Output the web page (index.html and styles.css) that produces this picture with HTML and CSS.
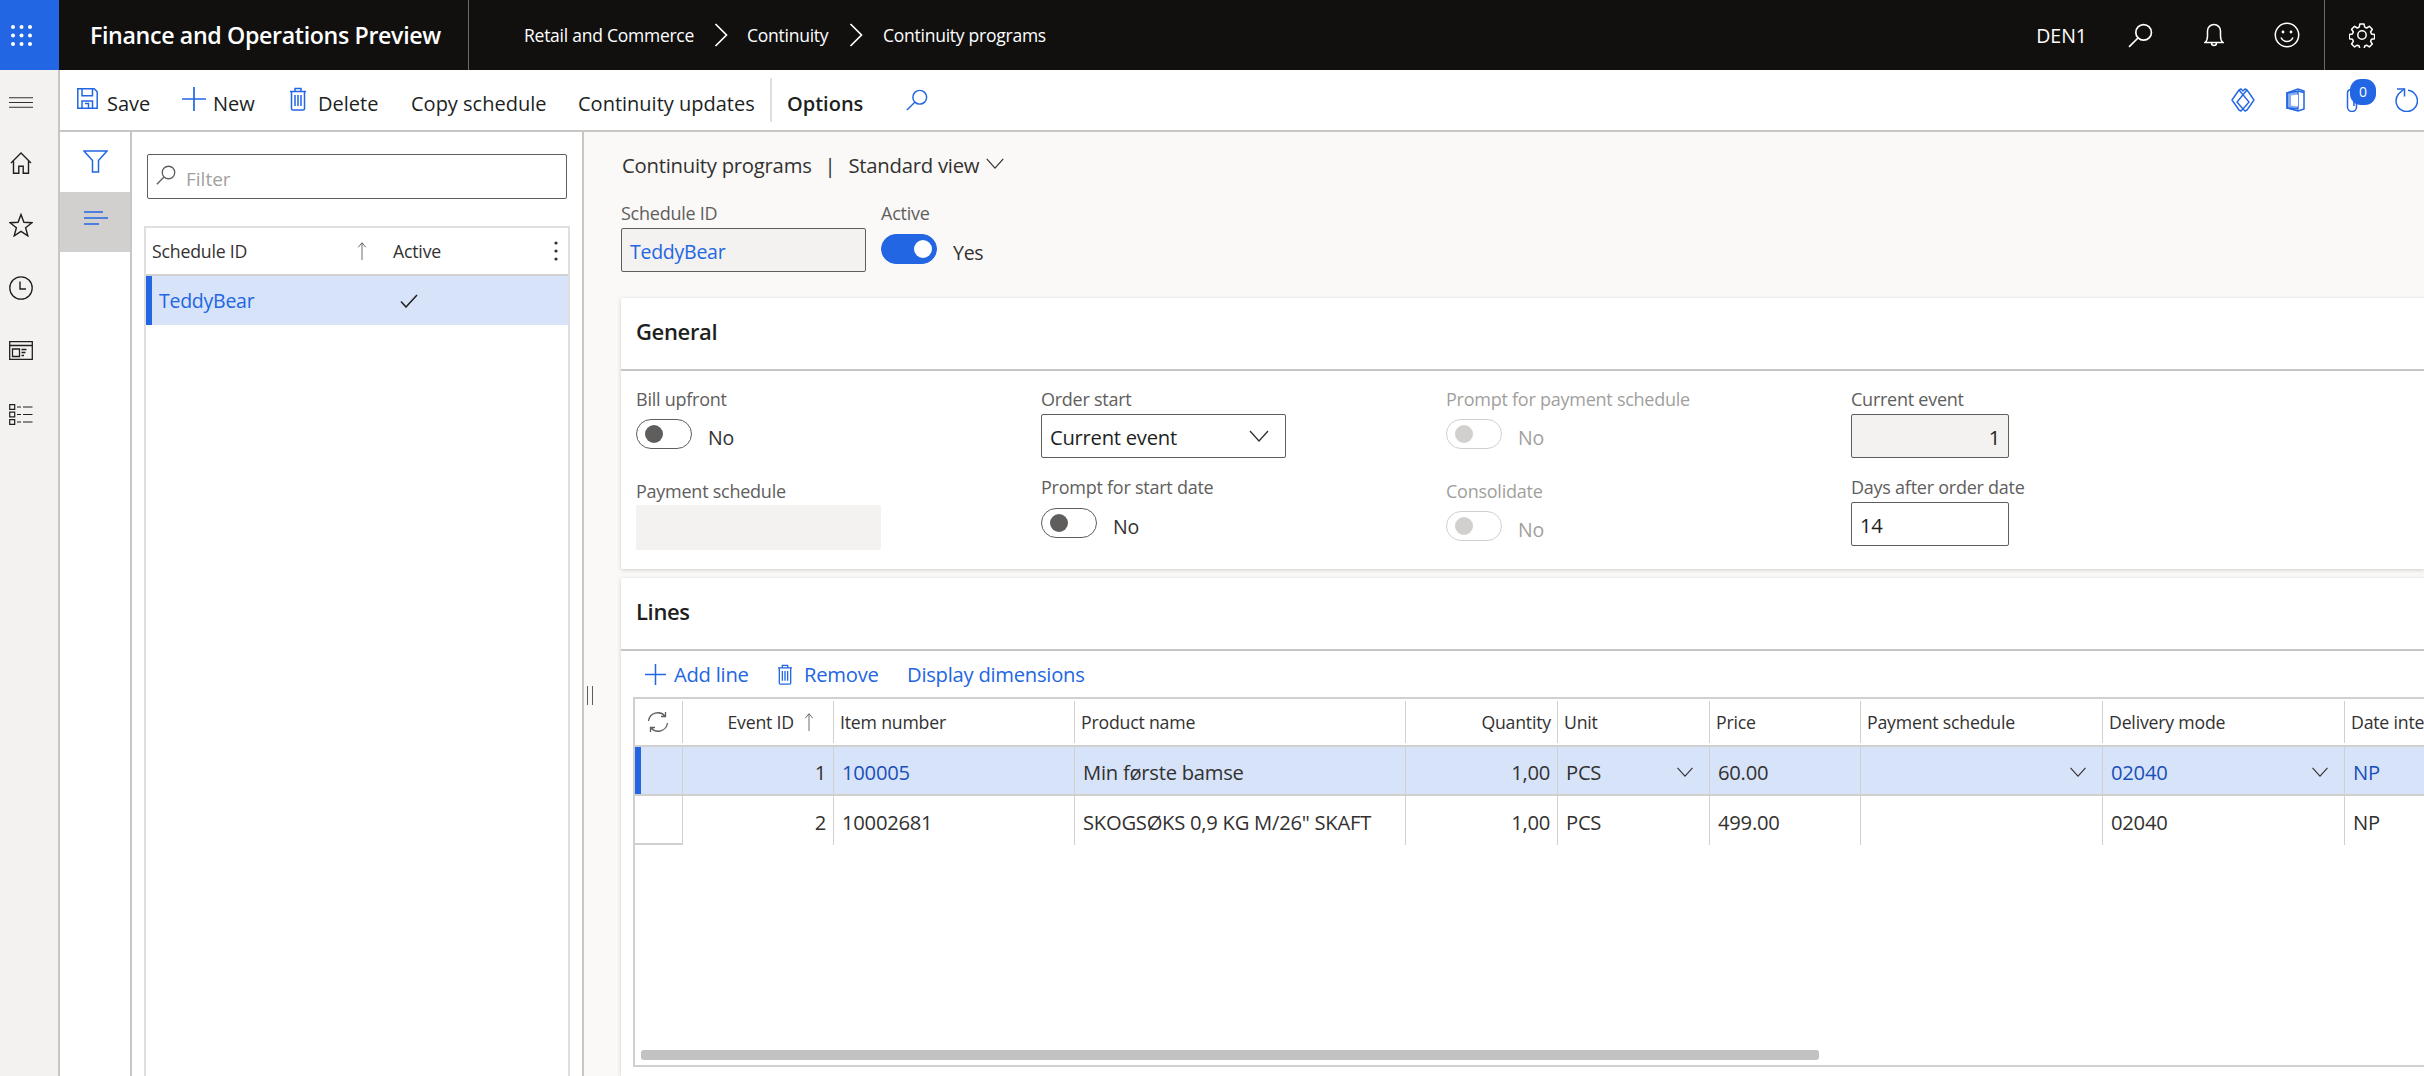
FILE: index.html
```html
<!DOCTYPE html>
<html lang="en">
<head>
<meta charset="utf-8">
<title>Continuity programs</title>
<link rel="stylesheet" href="styles.css">
</head>
<body>
<svg class="defs" width="0" height="0" aria-hidden="true">
  <symbol id="i-search" viewBox="0 0 24 24"><circle cx="15" cy="9" r="7.5" fill="none" stroke="currentColor" stroke-width="1.6"/><path d="M9.6 14.4 1 23" fill="none" stroke="currentColor" stroke-width="1.6"/></symbol>
  <symbol id="i-trash" viewBox="0 0 18 24"><path d="M1 4.5h16M6 4.500V1.500h6v3M2.500 4.500V22a1.200 1.200 0 0 0 1.200 1h10.600a1.200 1.200 0 0 0 1.200-1V4.500M6 8v11M9 8v11M12 8v11" fill="none" stroke="currentColor" stroke-width="1.500"/></symbol>
  <symbol id="i-plus" viewBox="0 0 24 24"><path d="M12 0v24M0 12h24" fill="none" stroke="currentColor" stroke-width="1.700"/></symbol>
  <symbol id="i-chev" viewBox="0 0 20 12"><path d="M1 1l9 10 9-10" fill="none" stroke="currentColor" stroke-width="1.300"/></symbol>
  <symbol id="i-up" viewBox="0 0 12 24"><path d="M6 24V1M1 7l5-6 5 6" fill="none" stroke="currentColor" stroke-width="1.200"/></symbol>
</svg>

<div class="app">
  <header class="topbar">
    <div class="waffle">
      <svg class="waffle-icon" viewBox="0 0 23 23"><g fill="#fff"><circle cx="3" cy="3" r="2"/><circle cx="11.500" cy="3" r="2"/><circle cx="20" cy="3" r="2"/><circle cx="3" cy="11.500" r="2"/><circle cx="11.500" cy="11.500" r="2"/><circle cx="20" cy="11.500" r="2"/><circle cx="3" cy="20" r="2"/><circle cx="11.500" cy="20" r="2"/><circle cx="20" cy="20" r="2"/></g></svg>
    </div>
    <div class="app-title">Finance and Operations Preview</div>
    <nav class="crumbs">
      <span>Retail and Commerce</span>
      <svg class="crumb-chev" viewBox="0 0 14 24"><path d="M1.500 1l11 11-11 11" fill="none" stroke="currentColor" stroke-width="1.700"/></svg>
      <span>Continuity</span>
      <svg class="crumb-chev" viewBox="0 0 14 24"><path d="M1.500 1l11 11-11 11" fill="none" stroke="currentColor" stroke-width="1.700"/></svg>
      <span>Continuity programs</span>
    </nav>
    <div class="top-right">
      <span class="company">DEN1</span>
      <svg class="top-icon ti-search"><use href="#i-search"/></svg>
      <svg class="top-icon ti-bell" viewBox="0 0 20 24"><path d="M1 19.500c2-1.500 2.500-3 2.500-6.500V8a6.500 6.500 0 0 1 13 0v5c0 3.500.5 5 2.500 6.500zM7.500 20a2.500 2.500 0 0 0 5 0" fill="none" stroke="currentColor" stroke-width="1.500"/></svg>
      <svg class="top-icon ti-smile" viewBox="0 0 26 26"><circle cx="13" cy="13" r="11.700" fill="none" stroke="currentColor" stroke-width="1.500"/><circle cx="9" cy="10" r="1.400" fill="currentColor"/><circle cx="17" cy="10" r="1.400" fill="currentColor"/><path d="M7 15.500c1.500 3 3.500 4 6 4s4.500-1 6-4" fill="none" stroke="currentColor" stroke-width="1.500"/></svg>
      <div class="top-settings">
        <svg class="top-icon ti-gear" viewBox="0 0 26 26"><path d="M10.800 1.500h4.400l.7 3.300 2 .9 2.900-1.800 3.100 3.100-1.800 2.900.9 2 3.300.7v4.400l-3.300.6-.9 2.100 1.800 2.800-3.100 3.100-2.900-1.800-2 .9-.7 3.100h-4.400l-.7-3.100-2-.9-2.900 1.800-3.100-3.100 1.800-2.800-.9-2.100-3.300-.6v-4.400l3.300-.7.9-2-1.800-2.900 3.100-3.100 2.900 1.800 2-.9z" transform="translate(.6 .6) scale(.95)" fill="none" stroke="currentColor" stroke-width="1.600" stroke-linejoin="round"/><circle cx="13" cy="13" r="4.200" fill="none" stroke="currentColor" stroke-width="1.500"/></svg>
      </div>
    </div>
  </header>

  <div class="main">
    <aside class="rail">
      <svg class="rail-burger" viewBox="0 0 24 11"><path d="M0 .7h24M0 5.500h24M0 10.300h24" stroke="#323130" stroke-width="1.100" fill="none"/></svg>
      <svg class="rail-icon rail-home" viewBox="0 0 22 22"><path d="M1 11 11 1l10 10M3.500 9v12.300h5.300v-7h4.400v7h5.300V9" fill="none" stroke="currentColor" stroke-width="1.400"/></svg>
      <svg class="rail-icon rail-star" viewBox="0 0 24 24"><path d="M12 1.500l2.900 7.800 8.100.4-6.400 5.100 2.200 8L12 18.300l-6.800 4.500 2.200-8L1 9.700l8.100-.4z" fill="none" stroke="currentColor" stroke-width="1.400"/></svg>
      <svg class="rail-icon rail-clock" viewBox="0 0 24 24"><circle cx="12" cy="12" r="11.200" fill="none" stroke="currentColor" stroke-width="1.300"/><path d="M11 5.500v7.500h6" fill="none" stroke="currentColor" stroke-width="1.400"/></svg>
      <svg class="rail-icon rail-space" viewBox="0 0 24 19"><path d="M.7.700h22.600v17.600H.7zM.7 4.500h22.600M3.500 8h7v7.500h-7zM12.500 8.500h5M12.500 11.500h4M12.500 14.500h2.500" fill="none" stroke="currentColor" stroke-width="1.300"/></svg>
      <svg class="rail-icon rail-list" viewBox="0 0 24 21"><path d="M.7.700h5v4.600h-5zM.7 8.200h5v4.600h-5zM.7 15.700h5v4.600h-5zM8 3h4M14 3h9.500M8 10.500h4M14 10.500h9.500M8 18h4M14 18h9.500" fill="none" stroke="currentColor" stroke-width="1.200"/></svg>
    </aside>

    <div class="workspace">
      <div class="cmdbar">
        <button class="cmd cmd-save">
          <svg class="cmd-icon ic-save" viewBox="0 0 21 21"><path d="M.8.800h16.400l3 3v16.400H.8zM5 .8v7h10.500v-7M5 20v-7h10.500v7M8 15.500h3.500V20" fill="none" stroke="currentColor" stroke-width="1.500"/></svg>
          <span>Save</span>
        </button>
        <button class="cmd cmd-new"><svg class="cmd-icon ic-plus"><use href="#i-plus"/></svg><span>New</span></button>
        <button class="cmd cmd-delete"><svg class="cmd-icon ic-trash"><use href="#i-trash"/></svg><span>Delete</span></button>
        <button class="cmd cmd-copy"><span>Copy schedule</span></button>
        <button class="cmd cmd-updates"><span>Continuity updates</span></button>
        <span class="cmd-sep"></span>
        <button class="cmd cmd-options"><span>Options</span></button>
        <svg class="cmd-icon ic-find"><use href="#i-search"/></svg>
        <div class="cmd-right">
          <svg class="cmd-icon ic-diamond" viewBox="0 0 24 24"><path d="M1 12 8 2l2-1 2 2 2-2 2 1 7 10-7 10-2 1-2-2-2 2-2-1zM8 2l10 12-6 7M16 2 6 14l6 7" fill="none" stroke="currentColor" stroke-width="1.400" stroke-linejoin="round"/></svg>
          <svg class="cmd-icon ic-office" viewBox="0 0 19 24"><path d="M1 5 12 1l6 2v18l-6 2-11-3z" fill="none" stroke="currentColor" stroke-width="1.500"/><path d="M1 5l11-2v18l-11-1zM12 3l6 1.500" fill="currentColor" fill-opacity=".55" stroke="currentColor" stroke-width="1.400"/><path d="M5 7.500l7-1v12l-7-1z" fill="#fff"/></svg>
          <span class="clip-wrap">
            <svg class="cmd-icon ic-clip" viewBox="0 0 12 24"><path d="M10.500 6v13a4.500 4.500 0 0 1-9 0V5a3.200 3.200 0 0 1 6.400 0v13" fill="none" stroke="currentColor" stroke-width="1.500"/></svg>
            <span class="badge">0</span>
          </span>
          <svg class="cmd-icon ic-refresh" viewBox="0 0 24 24"><path d="M14 2.200A10.700 10.700 0 1 1 4.500 6L10 1" fill="none" stroke="currentColor" stroke-width="1.500"/><path d="M3 1h7.500v7.500" fill="none" stroke="currentColor" stroke-width="1.500"/></svg>
        </div>
      </div>

      <div class="body">
        <div class="tabs">
          <div class="tab">
            <svg class="tab-icon ic-funnel" viewBox="0 0 25 23"><path d="M1 1h23l-8.500 9.500V22h-6V10.500z" fill="none" stroke="currentColor" stroke-width="1.500"/></svg>
          </div>
          <div class="tab tab-active">
            <svg class="tab-icon ic-lines" viewBox="0 0 25 14"><path d="M1 1h19M1 7h24M1 13h15" fill="none" stroke="currentColor" stroke-width="1.500"/></svg>
          </div>
        </div>

        <div class="listpane">
          <div class="filter">
            <svg class="filter-icon"><use href="#i-search"/></svg>
            <span>Filter</span>
          </div>
          <div class="listgrid">
            <div class="list-head">
              <span class="lh-id">Schedule ID</span>
              <svg class="lh-arrow"><use href="#i-up"/></svg>
              <span class="lh-active">Active</span>
              <svg class="lh-more" viewBox="0 0 4 20"><g fill="#323130"><circle cx="2" cy="2" r="1.600"/><circle cx="2" cy="10" r="1.600"/><circle cx="2" cy="18" r="1.600"/></g></svg>
            </div>
            <div class="list-row">
              <span class="list-id">TeddyBear</span>
              <svg class="list-check" viewBox="0 0 18 14"><path d="M1 7.500 6 13 17 1" fill="none" stroke="#201f1e" stroke-width="1.500"/></svg>
            </div>
          </div>
        </div>

        <main class="detail">
          <div class="splitter"></div>
          <div class="page-head">
            <span>Continuity programs</span>
            <span class="page-bar">|</span>
            <span>Standard view</span>
            <svg class="page-chev"><use href="#i-chev"/></svg>
          </div>
          <div class="head-fields">
            <div class="hf-id">
              <label class="lbl">Schedule ID</label>
              <div class="input input-ro input-link">TeddyBear</div>
            </div>
            <div class="hf-active">
              <label class="lbl">Active</label>
              <div class="toggle-row"><span class="toggle toggle-on"></span><span class="toggle-text">Yes</span></div>
            </div>
          </div>

          <section class="card card-general">
            <h2 class="card-title">General</h2>
            <div class="form">
              <div class="field"><label class="lbl">Bill upfront</label><div class="toggle-row"><span class="toggle"></span><span class="toggle-text">No</span></div></div>
              <div class="field"><label class="lbl">Order start</label><div class="input input-select">Current event<svg class="sel-chev"><use href="#i-chev"/></svg></div></div>
              <div class="field field-dis"><label class="lbl">Prompt for payment schedule</label><div class="toggle-row"><span class="toggle"></span><span class="toggle-text">No</span></div></div>
              <div class="field"><label class="lbl">Current event</label><div class="input input-num input-ro">1</div></div>
              <div class="field field-low"><label class="lbl">Payment schedule</label><div class="input input-blank"></div></div>
              <div class="field"><label class="lbl">Prompt for start date</label><div class="toggle-row toggle-row-high"><span class="toggle"></span><span class="toggle-text">No</span></div></div>
              <div class="field field-dis field-low"><label class="lbl">Consolidate</label><div class="toggle-row"><span class="toggle"></span><span class="toggle-text">No</span></div></div>
              <div class="field"><label class="lbl">Days after order date</label><div class="input input-days">14</div></div>
            </div>
          </section>

          <section class="card card-lines">
            <h2 class="card-title">Lines</h2>
            <div class="lines-bar">
              <svg class="lb-plus"><use href="#i-plus"/></svg><span class="lb-add">Add line</span>
              <svg class="lb-trash"><use href="#i-trash"/></svg><span class="lb-remove">Remove</span>
              <span>Display dimensions</span>
            </div>
            <div class="grid">
              <div class="g-row g-head">
                <div class="gc gc-sel">
                  <svg class="sync" viewBox="0 0 22 22"><path d="M1.500 10A9.500 9.500 0 0 1 18 5M20.500 12A9.500 9.500 0 0 1 4 17M14 5.500h4.500V1M8 16.500H3.500V21" fill="none" stroke="#605e5c" stroke-width="1.300"/></svg>
                </div>
                <div class="gc gc-right gc-event">Event ID<svg class="head-arrow"><use href="#i-up"/></svg></div>
                <div class="gc">Item number</div>
                <div class="gc">Product name</div>
                <div class="gc gc-right">Quantity</div>
                <div class="gc">Unit</div>
                <div class="gc">Price</div>
                <div class="gc">Payment schedule</div>
                <div class="gc">Delivery mode</div>
                <div class="gc">Date inte</div>
              </div>
              <div class="g-row g-data g-selected">
                <div class="gc gc-sel"><span class="sel-bar"></span></div>
                <div class="gc gc-right gc-num">1</div>
                <div class="gc gc-link">100005</div>
                <div class="gc">Min første bamse</div>
                <div class="gc gc-right">1,00</div>
                <div class="gc gc-drop">PCS<svg class="cell-chev"><use href="#i-chev"/></svg></div>
                <div class="gc">60.00</div>
                <div class="gc gc-drop"><svg class="cell-chev"><use href="#i-chev"/></svg></div>
                <div class="gc gc-drop gc-link">02040<svg class="cell-chev"><use href="#i-chev"/></svg></div>
                <div class="gc gc-link">NP</div>
              </div>
              <div class="g-row g-data">
                <div class="gc gc-sel gc-sel-last"></div>
                <div class="gc gc-right gc-num">2</div>
                <div class="gc">10002681</div>
                <div class="gc">SKOGSØKS 0,9 KG M/26" SKAFT</div>
                <div class="gc gc-right">1,00</div>
                <div class="gc">PCS</div>
                <div class="gc">499.00</div>
                <div class="gc"></div>
                <div class="gc">02040</div>
                <div class="gc">NP</div>
              </div>
              <div class="scrollbar"></div>
            </div>
          </section>
        </main>
      </div>
    </div>
  </div>
</div>
</body>
</html>
```

FILE: styles.css
```css
* { box-sizing: border-box; }
html, body { margin: 0; padding: 0; height: 100%; overflow: hidden; }
body { font-family: "Open Sans", "Noto Sans", "Liberation Sans", sans-serif; color: #201f1e; background: #fff; font-size: 19px; }
.defs { position: absolute; }
svg { display: block; flex: none; }
button { font: inherit; color: inherit; background: none; border: 0; padding: 0; }

.app { width: 2424px; height: 1076px; display: flex; flex-direction: column; overflow: hidden; }

/* top bar */
.topbar { height: 70px; flex: none; background: #11100f; color: #fff; display: flex; align-items: center; }
.waffle { width: 59px; height: 70px; background: #2266e3; display: flex; align-items: center; padding-left: 10px; flex: none; }
.waffle-icon { width: 23px; height: 23px; }
.app-title { width: 410px; height: 70px; padding-left: 31px; border-right: 1px solid #6b6a69; line-height: 70px; font-size: 23.200px; font-weight: 600; letter-spacing: -.35px; flex: none; }
.crumbs { display: flex; align-items: center; margin-left: 55px; font-size: 17.500px; letter-spacing: -.25px; }
.crumb-chev { width: 14px; height: 24px; }
.crumbs span:nth-child(1) { width: 190px; }
.crumbs span:nth-child(3) { width: 102px; margin-left: 19px; }
.crumbs span:nth-child(5) { margin-left: 20px; }
.top-right { margin-left: auto; display: flex; align-items: center; height: 70px; }
.company { font-size: 19.500px; margin-right: 41px; }
.top-icon { color: #fff; }
.ti-search { width: 25px; height: 25px; margin-right: 51px; }
.ti-bell { width: 20px; height: 24px; margin-right: 50px; }
.ti-smile { width: 26px; height: 26px; margin-right: 24px; }
.top-settings { width: 100px; height: 70px; border-left: 1px solid #6b6a69; padding-left: 24px; display: flex; align-items: center; }
.ti-gear { width: 26px; height: 26px; }

.main { flex: 1; display: flex; min-height: 0; }

/* left rail */
.rail { width: 60px; flex: none; background: #f3f2f1; border-right: 2px solid #c8c6c4; color: #201f1e; display: flex; flex-direction: column; padding: 27px 0 0 9px; }
.rail-burger { width: 24px; height: 11px; }
.rail-icon { color: #201f1e; }
.rail-home { width: 22px; height: 22px; margin-top: 44px; margin-left: 1px; }
.rail-star { width: 24px; height: 24px; margin-top: 39px; }
.rail-clock { width: 24px; height: 24px; margin-top: 39px; }
.rail-space { width: 24px; height: 19px; margin-top: 41px; }
.rail-list { width: 24px; height: 21px; margin-top: 44px; }

.workspace { flex: 1; min-width: 0; display: flex; flex-direction: column; }

/* command bar */
.cmdbar { height: 62px; flex: none; border-bottom: 2px solid #c8c6c4; display: flex; align-items: center; font-size: 20px; letter-spacing: -.25px; background: #fff; }
.cmd { display: flex; align-items: center; white-space: nowrap; height: 44px; padding-top: 6px; }
.cmd-icon { color: #2266e3; }
.ic-save { width: 21px; height: 21px; margin-right: 9px; margin-top: -9px; }
.ic-plus { width: 24px; height: 24px; margin-right: 7px; margin-top: -8px; }
.ic-trash { width: 18px; height: 24px; margin-right: 11px; margin-top: -9px; }
.cmd-save { margin-left: 17px; width: 105px; }
.cmd-new { width: 107px; }
.cmd-delete { width: 122px; }
.cmd-copy { width: 167px; }
.cmd-updates { width: 192px; }
.cmd-sep { width: 2px; height: 44px; background: #e1dfdd; }
.cmd-options { margin-left: 15px; width: 119px; font-weight: 600; }
.ic-find { width: 22px; height: 22px; margin-top: 0; }
.cmd-right { margin-left: auto; display: flex; align-items: center; padding-right: 6px; }
.ic-diamond { width: 24px; height: 24px; margin-right: 31px; }
.ic-office { width: 19px; height: 24px; margin-right: 41px; }
.clip-wrap { position: relative; display: block; width: 12px; height: 24px; margin-right: 36px; }
.ic-clip { width: 12px; height: 24px; }
.badge { position: absolute; left: 4px; top: -9px; width: 26px; height: 26px; border-radius: 11px; background: #2266e3; color: #fff; font-size: 14px; line-height: 25px; text-align: center; }
.ic-refresh { width: 24px; height: 24px; }

.body { flex: 1; display: flex; min-height: 0; }

/* tabs */
.tabs { width: 72px; flex: none; border-right: 2px solid #c8c6c4; display: flex; flex-direction: column; }
.tab { height: 60px; display: flex; align-items: center; justify-content: center; color: #2266e3; }
.tab-active { background: #d2d0ce; }
.tab-icon { color: #2266e3; }
.ic-funnel { width: 25px; height: 23px; margin-top: -1px; }
.ic-lines { width: 25px; height: 14px; margin-top: -8px; }

/* list */
.listpane { width: 452px; flex: none; border-right: 2px solid #c8c6c4; padding: 22px 14px 0 12px; display: flex; flex-direction: column; background: #fff; }
.filter { width: 420px; height: 45px; margin-left: 3px; border: 1px solid #605e5c; border-radius: 2px; display: flex; align-items: center; padding: 0 0 0 8px; color: #a19f9d; font-size: 19px; }
.filter-icon { width: 20px; height: 20px; color: #605e5c; margin-right: 10px; margin-top: -3px; }
.filter span { margin-top: 5px; }
.listgrid { margin-top: 27px; flex: 1; width: 426px; border: 2px solid #e1dfdd; border-bottom: 0; }
.list-head { height: 48px; border-bottom: 2px solid #d2d0ce; display: flex; align-items: center; font-size: 17.700px; font-weight: 500; letter-spacing: -.2px; color: #323130; padding-left: 6px; }
.lh-id { width: 205px; }
.lh-arrow { width: 10px; height: 18px; color: #605e5c; }
.lh-active { margin-left: 26px; }
.lh-more { width: 4px; height: 20px; margin-left: auto; margin-right: 10px; }
.list-row { height: 49px; background: #d7e3f9; border-left: 6px solid #2266e3; display: flex; align-items: center; padding-left: 7px; }
.list-id { width: 241px; color: #2266e3; font-size: 19.500px; letter-spacing: -.25px; }
.list-check { width: 18px; height: 14px; }

/* detail */
.detail { flex: 1; min-width: 0; position: relative; background: #faf9f8; padding: 0 0 0 37px; display: flex; flex-direction: column; overflow: hidden; }
.splitter { position: absolute; left: 3px; top: 554px; width: 6px; height: 19px; border-left: 1.500px solid #605e5c; border-right: 1.500px solid #605e5c; }
.page-head { height: 30px; margin-top: 18px; padding-left: 1px; display: flex; align-items: center; font-size: 20.300px; letter-spacing: -.25px; color: #323130; white-space: nowrap; }
.page-bar { margin: 0 13px; }
.page-chev { width: 20px; height: 11px; margin-left: 6px; margin-top: -3px; }
.head-fields { display: flex; margin-top: 20px; }
.hf-id { width: 260px; }
.lbl { display: block; height: 26px; line-height: 26px; font-size: 18px; letter-spacing: -.25px; color: #605e5c; font-weight: 500; white-space: nowrap; }
.input { height: 44px; width: 245px; border: 1px solid #605e5c; border-radius: 2px; background: #fff; display: flex; align-items: center; padding: 2px 8px 0; font-size: 20.200px; letter-spacing: -.25px; color: #201f1e; position: relative; }
.input-ro { background: #f3f2f1; }
.input-link { color: #2266e3; margin-top: 2px; font-size: 19.500px; }
.input-select { margin-top: 2px; }
.sel-chev { width: 20px; height: 12px; margin-left: auto; margin-right: 8px; margin-top: -2px; color: #323130; }
.input-num { width: 158px; justify-content: flex-end; margin-top: 2px; }
.input-blank { background: #f3f2f1; border: 0; height: 45px; margin-top: 1px; }
.input-days { width: 158px; margin-top: 2px; }
.toggle-row { display: flex; align-items: center; margin-top: 7px; height: 30px; }
.toggle-row-high { margin-top: 8px; }
.hf-active .toggle-row { margin-top: 8px; }
.toggle { width: 56px; height: 30px; border-radius: 15px; border: 1px solid #605e5c; background: #fff; position: relative; display: block; flex: none; }
.toggle::after { content: ""; position: absolute; left: 8px; top: 5px; width: 18px; height: 18px; border-radius: 50%; background: #605e5c; }
.toggle-on { background: #2266e3; border-color: #2266e3; }
.toggle-on::after { left: 32px; background: #fff; }
.toggle-text { margin-left: 16px; margin-top: 6px; font-size: 19.500px; color: #323130; letter-spacing: -.25px; }

.card { background: #fff; box-shadow: 0 1px 4px rgba(0,0,0,.18); border-radius: 2px 0 0 2px; }
.card-title { margin: 0; height: 73px; border-bottom: 2px solid #c8c6c4; padding: 19px 0 0 15px; font-size: 22px; font-weight: 600; letter-spacing: -.35px; line-height: 28px; color: #201f1e; }
.card-general { height: 271px; margin-top: 26px; }
.form { display: grid; grid-template-columns: repeat(4, 405px); grid-template-rows: 88px 88px; padding: 15px 0 0 15px; }
.field-low { margin-top: 4px; }
.field-dis .lbl, .field-dis .toggle-text { color: #a19f9d; }
.field-dis .toggle { border-color: #d2d0ce; }
.field-dis .toggle::after { background: #d2d0ce; }

.card-lines { flex: 1; margin-top: 9px; border-radius: 2px 0 0 0; display: flex; flex-direction: column; min-height: 0; }
.lines-bar { height: 46px; flex: none; display: flex; align-items: center; padding-left: 24px; font-size: 20.200px; letter-spacing: -.25px; color: #2266e3; white-space: nowrap; }
.lb-plus { width: 21px; height: 21px; margin-right: 8px; }
.lb-add { width: 103px; }
.lb-trash { width: 16px; height: 21px; margin-right: 11px; }
.lb-remove { width: 103px; }

.grid { height: 370px; flex: none; margin-left: 12px; border: 2px solid #d2d0ce; border-right: 0; display: flex; flex-direction: column; }
.g-row { display: grid; grid-template-columns: 48px 151px 241px 331px 152px 152px 151px 242px 242px 90px; }
.g-head { height: 48px; border-bottom: 2px solid #d2d0ce; font-size: 17.700px; font-weight: 500; letter-spacing: -.2px; color: #323130; }
.g-data { height: 49px; font-size: 20.200px; letter-spacing: -.25px; color: #323130; }
.g-selected { background: #d7e3f9; border-bottom: 2px solid #d2d0ce; }
.gc { border-right: 1px solid #d2d0ce; display: flex; align-items: center; padding-left: 8px; white-space: nowrap; overflow: hidden; }
.g-data .gc { padding-top: 2px; }
.g-head .gc { padding-left: 6px; margin: 2px 0; }
.gc:last-child { border-right: 0; }
.gc-right, .g-head .gc-right { justify-content: flex-end; padding: 0 6px 0 0; }
.g-data .gc-right { padding-right: 7px; }
.gc-sel, .g-head .gc-sel, .g-data .gc-sel { padding: 0; position: relative; justify-content: center; }
.g-head .gc-event { padding-right: 19px; }
.head-arrow { width: 10px; height: 18px; margin-left: 10px; color: #605e5c; }
.sync { width: 22px; height: 22px; margin-left: -2px; }
.sel-bar { position: absolute; left: 0; top: 0; bottom: 0; width: 6px; background: #2266e3; }
.gc-sel-last { border-bottom: 2px solid #d2d0ce; }
.gc-link { color: #1a4fb8; }
.gc-drop { position: relative; }
.cell-chev { width: 18px; height: 10px; margin-left: auto; margin-right: 15px; color: #323130; }
.scrollbar { margin: auto 0 5px 6px; width: 1178px; height: 10px; flex: none; background: #c2c2c2; border-radius: 3px; }
```
